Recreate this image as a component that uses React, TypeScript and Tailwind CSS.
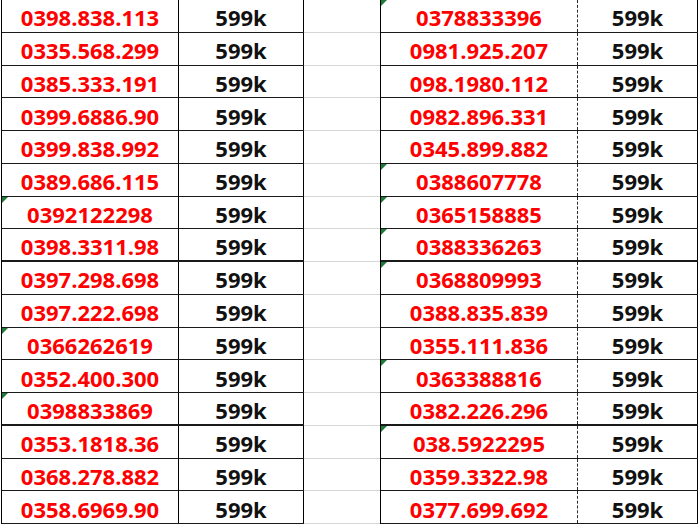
const left = [
  { n: "0398.838.113" },
  { n: "0335.568.299" },
  { n: "0385.333.191" },
  { n: "0399.6886.90" },
  { n: "0399.838.992" },
  { n: "0389.686.115" },
  { n: "0392122298", warn: true },
  { n: "0398.3311.98" },
  { n: "0397.298.698" },
  { n: "0397.222.698" },
  { n: "0366262619", warn: true },
  { n: "0352.400.300" },
  { n: "0398833869", warn: true },
  { n: "0353.1818.36" },
  { n: "0368.278.882" },
  { n: "0358.6969.90" },
];

const right = [
  { n: "0378833396", warn: true },
  { n: "0981.925.207" },
  { n: "098.1980.112" },
  { n: "0982.896.331" },
  { n: "0345.899.882" },
  { n: "0388607778", warn: true },
  { n: "0365158885", warn: true },
  { n: "0388336263", warn: true },
  { n: "0368809993", warn: true },
  { n: "0388.835.839" },
  { n: "0355.111.836" },
  { n: "0363388816", warn: true },
  { n: "0382.226.296" },
  { n: "038.5922295", warn: true },
  { n: "0359.3322.98" },
  { n: "0377.699.692" },
];

// rows 8 and 13 have a heavier bottom line
const thick = (i: number) => i === 7 || i === 12;

type Row = { n: string; warn?: boolean };

function Warn() {
  return (
    <span className="absolute left-0 top-0 h-0 w-0 border-t-[6px] border-r-[6px] border-t-[#1f7a3a] border-r-transparent" />
  );
}

function Table({ rows, side }: { rows: Row[]; side: "left" | "right" }) {
  const isLeft = side === "left";
  return (
    <div className="flex flex-col self-start border-l border-black">
      {rows.map((r, i) => (
        <div
          key={i}
          className={`flex h-[32.75px] border-[#1a1a1a] ${thick(i) ? "border-b-2" : "border-b"}`}
        >
          <div
            className={`relative flex items-center justify-center pt-[4px] text-[22px] font-bold text-[#ff0000] border-r ${
              isLeft ? "w-[177px] border-black" : "w-[197px] border-dashed border-[#2a2a2a]"
            }`}
          >
            {r.warn && <Warn />}
            {r.n}
          </div>
          <div
            className={`flex items-center justify-center pt-[4px] text-[22px] font-bold text-[#111] border-r border-black ${
              isLeft ? "w-[125px]" : "w-[120px]"
            }`}
          >
            599k
          </div>
        </div>
      ))}
    </div>
  );
}

export default function App() {
  return (
    <div
      className="flex h-[527px] w-[700px] items-start overflow-hidden bg-white pl-[1px]"
      style={{ fontFamily: '"Open Sans", "Noto Sans", sans-serif' }}
    >
      <Table rows={left} side="left" />
      {/* empty spreadsheet column between the two lists */}
      <div className="flex w-[76px] flex-col">
        {left.map((_, i) => (
          <div key={i} className="h-[32.75px] border-b border-[#d6d6d6]" />
        ))}
      </div>
      <Table rows={right} side="right" />
    </div>
  );
}
